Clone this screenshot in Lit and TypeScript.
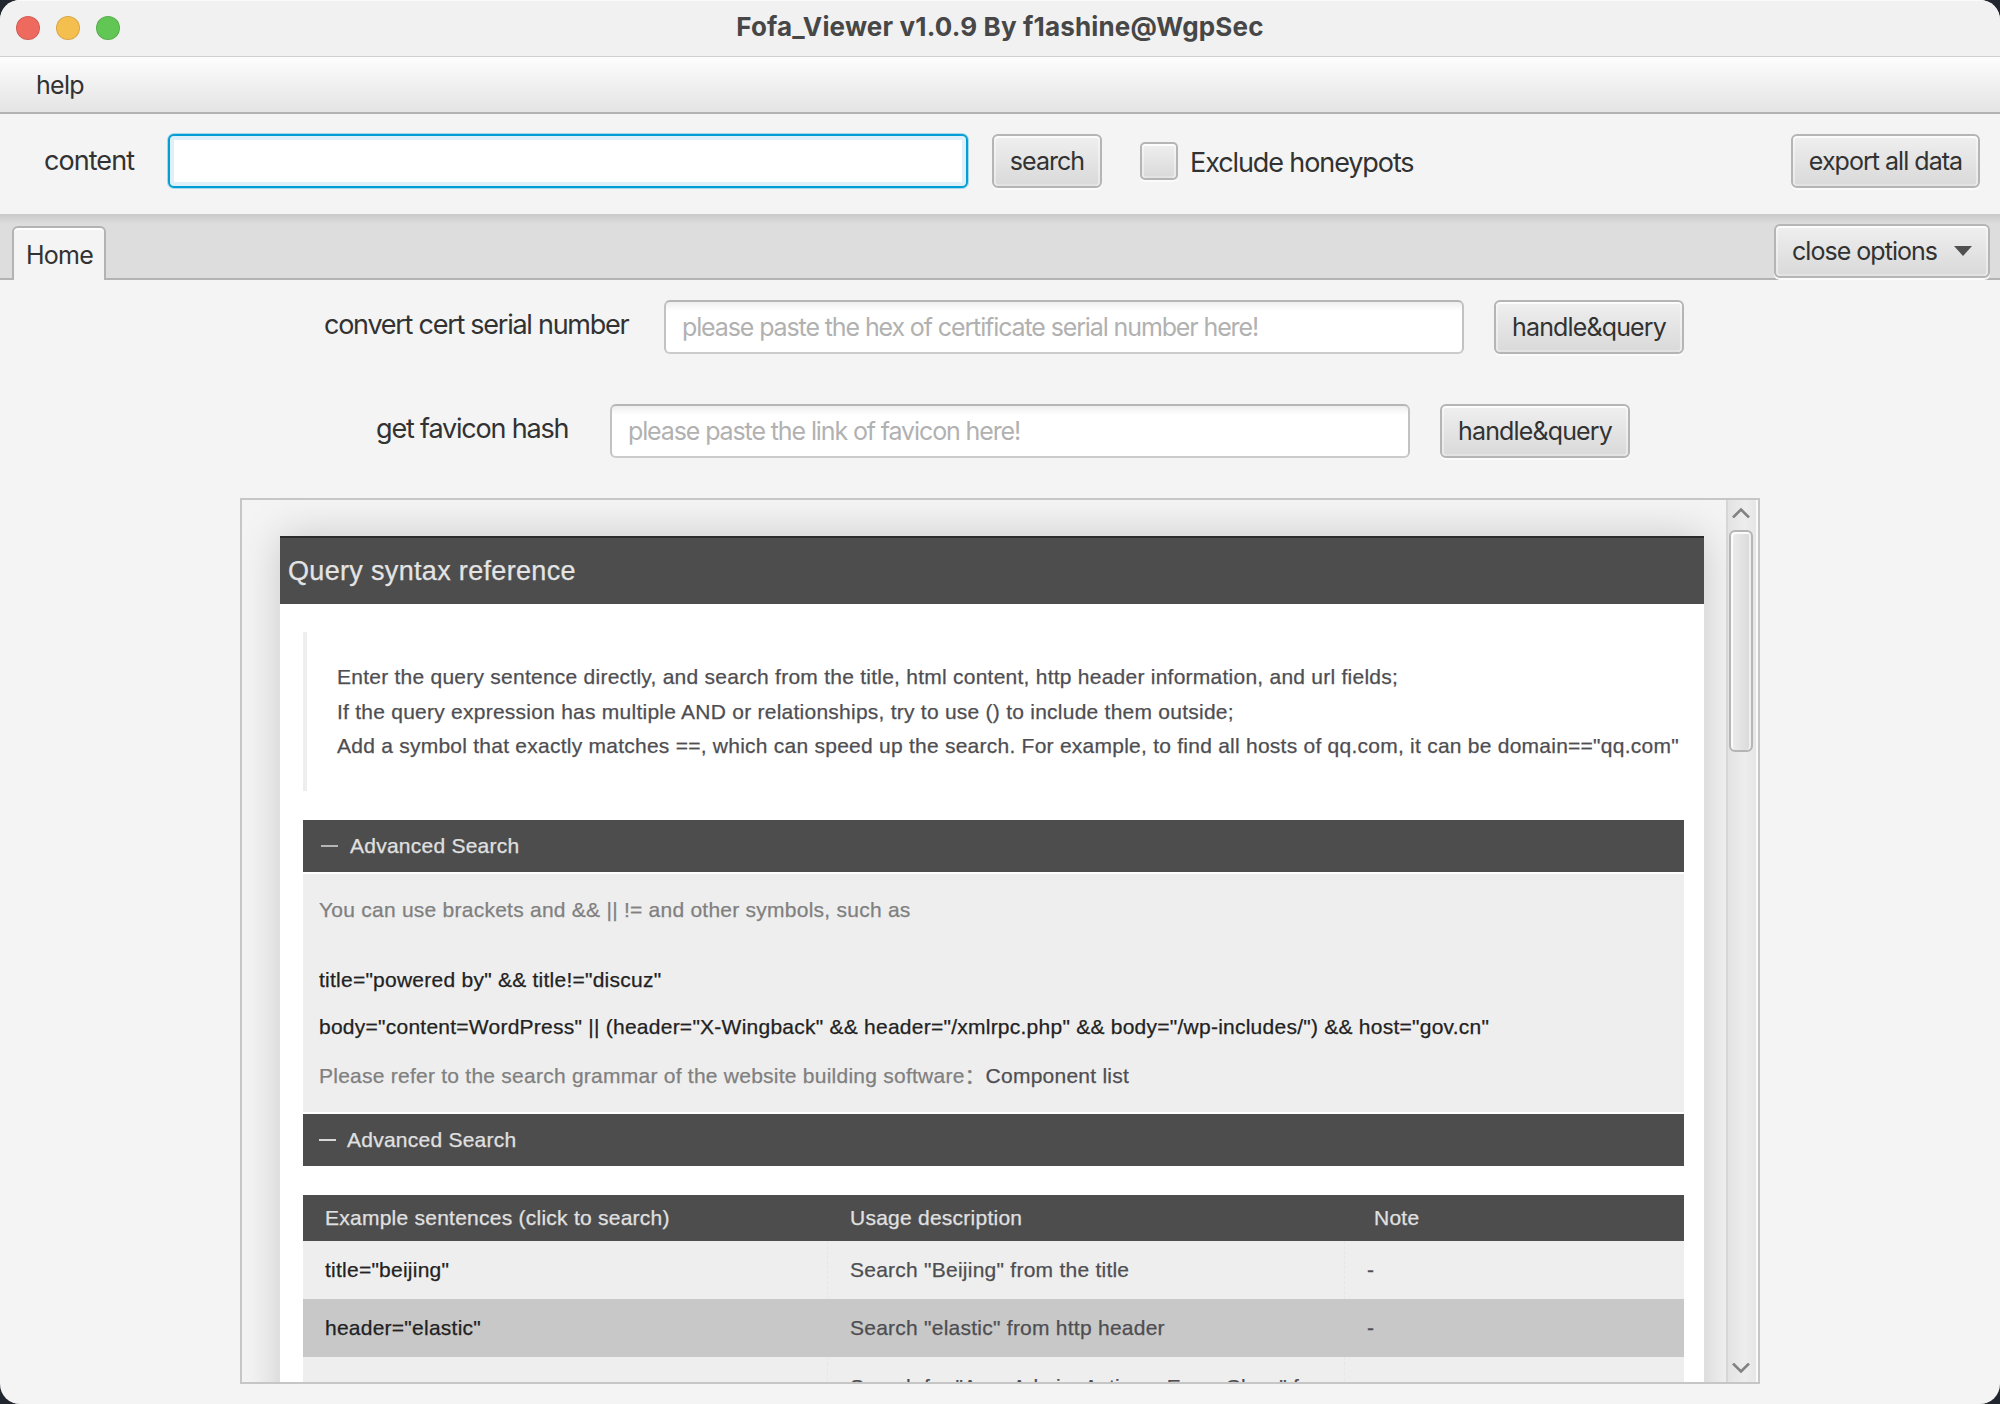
import { LitElement, html, css, svg } from "lit";
import { customElement } from "lit/decorators.js";

interface SyntaxRow {
  example: string;
  usage: string;
  note: string;
}

const ROWS: SyntaxRow[] = [
  { example: 'title="beijing"', usage: 'Search "Beijing" from the title', note: "-" },
  { example: 'header="elastic"', usage: 'Search "elastic" from http header', note: "-" },
  { example: "", usage: 'Search for "App, Admin, Actions, Error, Class" f', note: "" },
];

const chevron = (d: string) => html`
  <svg class="chevron" viewBox="0 0 18 10" width="18" height="10">${svg`<path d=${d} />`}</svg>
`;

@customElement("app-root")
export class AppRoot extends LitElement {
  static styles = css`
    :host {
      display: block;
      width: 2000px;
      height: 1404px;
      background: #22262e;
      overflow: hidden;
    }
    * {
      box-sizing: border-box;
    }
    .window {
      display: flex;
      flex-direction: column;
      width: 2000px;
      height: 1404px;
      border-radius: 20px;
      overflow: hidden;
      background: #f4f4f4;
      color: #323232;
      font-family: Inter, "Liberation Sans", sans-serif;
      font-size: 25px;
      white-space: nowrap;
    }
    .titlebar {
      display: grid;
      grid-template-columns: 1fr auto 1fr;
      align-items: center;
      height: 57px;
      padding: 0 16px 1px;
      background: #f1f1f1;
      border-bottom: 1px solid #cfcfcf;
      box-shadow: inset 0 1px 0 #fafafa;
    }
    .lights {
      display: flex;
      gap: 16px;
    }
    .light {
      width: 24px;
      height: 24px;
      border-radius: 50%;
      border: 1px solid rgba(0, 0, 0, 0.12);
    }
    .red { background: #ee6a5f; }
    .amber { background: #f5bf4f; }
    .green { background: #62c655; }
    .title {
      font-size: 26px;
      font-weight: 700;
      letter-spacing: 0.16px;
      color: #474747;
      line-height: 52px;
      padding-bottom: 2px;
    }
    .menubar {
      height: 57px;
      padding-left: 36px;
      line-height: 56px;
      letter-spacing: -0.7px;
      background: linear-gradient(#fdfdfd, #e4e4e4);
      border-bottom: 2px solid #b3b3b3;
    }
    .toolbar {
      display: flex;
      height: 100px;
      padding: 20px 20px 0 44px;
    }
    .label,
    .check-label {
      font-size: 27px;
    }
    .toolbar .label {
      width: 124px;
      line-height: 53px;
      letter-spacing: -0.95px;
    }
    .field {
      width: 800px;
      height: 54px;
      padding-left: 16px;
      border: 2px solid #c2c2c2;
      border-top-color: #b5b5b5;
      border-bottom-color: #cbcbcb;
      border-radius: 6px;
      background: linear-gradient(#eeeeee, #ffffff 9px);
      color: #b1b1b1;
      line-height: 51px;
      letter-spacing: -1.12px;
    }
    .focused {
      border-color: #039ed3;
      background: #ffffff;
      box-shadow: inset 0 0 0 4px #dff0f8, 0 0 0 1px #a5d8ea;
    }
    .button {
      height: 54px;
      border: 2px solid #b5b5b5;
      border-radius: 6px;
      background: linear-gradient(#efefef, #d9d9d9);
      box-shadow: inset 0 2px 0 #fcfcfc, inset 2px 0 0 rgba(255, 255, 255, 0.4),
        inset -2px 0 0 rgba(255, 255, 255, 0.4), inset 0 -2px 0 rgba(255, 255, 255, 0.25), 0 2px 0 #fbfbfb;
      line-height: 50px;
      text-align: center;
      letter-spacing: -0.97px;
    }
    .search { width: 110px; margin-left: 24px; }
    .checkbox {
      width: 38px;
      height: 38px;
      margin: 8px 12px 0 38px;
      border-radius: 5px;
    }
    .check-label { line-height: 57px; letter-spacing: -1.1px; }
    .export { width: 189px; margin-left: auto; }
    .tabs {
      display: flex;
      justify-content: space-between;
      height: 66px;
      padding: 10px 10px 0 12px;
      background: linear-gradient(#c9c9c9, #dddddd 10px);
      border-bottom: 2px solid #b3b3b3;
    }
    .tab {
      width: 94px;
      height: 54px;
      margin-top: 2px;
      border: 2px solid #b3b3b3;
      border-bottom: none;
      border-radius: 6px 6px 0 0;
      background: #f4f4f4;
      box-shadow: inset 0 2px 0 #ffffff;
      line-height: 54px;
      text-align: center;
      letter-spacing: -0.8px;
      padding-left: 1px;
    }
    .close {
      display: flex;
      align-items: center;
      width: 216px;
      padding-left: 16px;
      gap: 17px;
    }
    .triangle {
      width: 18px;
      height: 10px;
      clip-path: polygon(0 0, 100% 0, 50% 100%);
      background: #505050;
    }
    .form-row {
      display: flex;
      height: 54px;
      margin-bottom: 50px;
    }
    .form-row .label { line-height: 50px; letter-spacing: -1.26px; }
    .cert { margin-top: 20px; padding-left: 324px; }
    .cert .label { width: 340px; }
    .form-row.favicon { padding-left: 376px; margin-bottom: 40px; }
    .favicon .label { width: 234px; letter-spacing: -1.18px; }
    .query { width: 190px; margin-left: 30px; letter-spacing: -0.86px; }
    .panel {
      display: flex;
      width: 1520px;
      height: 886px;
      margin-left: 240px;
      border: 2px solid #c6c6c6;
    }
    .view {
      width: 1484px;
      height: 882px;
      padding: 36px 20px 0 38px;
      overflow: hidden;
      font-family: "Liberation Sans", Arial, sans-serif;
      font-size: 21px;
      letter-spacing: 0.245px;
      -webkit-text-stroke: 0.25px currentColor;
      color: #4e4e52;
    }
    .card {
      width: 1424px;
      height: 1200px;
      background: #ffffff;
      box-shadow: 0 0 40px rgba(0, 0, 0, 0.18);
    }
    .card-head {
      height: 68px;
      padding-left: 8px;
      border-top: 2px solid #2b2b2b;
      background: #4d4d4d;
      color: #e4e4e4;
      font-size: 27px;
      letter-spacing: 0.33px;
      line-height: 66px;
    }
    .card-body { padding: 28px 20px 0 23px; }
    .quote {
      height: 159px;
      padding: 28px 0 0 30px;
      border-left: 4px solid #eeeeee;
      line-height: 34.7px;
    }
    .bar {
      display: flex;
      align-items: center;
      height: 52px;
      background: #4d4d4d;
      color: #e0e0e0;
      line-height: 52px;
    }
    .bar-first { margin-top: 29px; padding-left: 18px; gap: 12px; }
    .bar-second { margin-top: 2px; padding-left: 16px; gap: 11px; }
    .dash { width: 17px; height: 2px; background: #b5b5b5; }
    .bar-second .dash { background: #d8d8d8; }
    .syntax {
      height: 238px;
      margin-top: 2px;
      padding: 18px 0 0 16px;
      background: #eeeeee;
      color: #808080;
      line-height: 36px;
    }
    .code { color: #222222; }
    .code-first { margin-top: 34px; }
    .code-second { margin-top: 11px; }
    .refer { display: flex; margin-top: 13px; }
    .component { margin-left: 11px; color: #4e4e52; }
    .colon { width: 10px; line-height: 32px; font-family: "Noto Sans CJK SC", sans-serif; }
    .table { margin-top: 29px; }
    .row {
      display: grid;
      grid-template-columns: 524px 517px 1fr;
      height: 58px;
      background: #eeeeee;
      line-height: 58px;
    }
    .row:nth-child(odd) { background: #c8c8c8; }
    .row:first-child {
      height: 46px;
      background: #4d4d4d;
      color: #e0e0e0;
      line-height: 46px;
    }
    .row:last-child { line-height: 60px; }
    .cell { padding-left: 22px; }
    .cell + .cell { padding-left: 23px; }
    .row:nth-child(even) .cell + .cell { border-left: 1px dashed #e6e6e6; padding-left: 22px; }
    .row .cell.head-note { padding-left: 30px; }
    .scrollbar {
      display: flex;
      flex-direction: column;
      align-items: center;
      width: 32px;
      height: 882px;
      padding: 8px 2px 9px 0;
      border-left: 2px solid #d6d6d6;
      border-right: 2px solid #fafafa;
      background: linear-gradient(90deg, #e3e3e3, #ededed 60%, #e6e6e6);
    }
    .thumb {
      width: 24px;
      height: 222px;
      margin-top: 12px;
      margin-bottom: auto;
      border: 2px solid #b5b5b5;
      border-radius: 6px;
      background: linear-gradient(90deg, #ededed, #d9d9d9);
      box-shadow: inset 2px 2px 0 #fbfbfb, inset -2px 0 0 #f0f0f0;
    }
    .chevron {
      flex: none;
      fill: none;
      stroke: #828282;
      stroke-width: 2.6;
    }
  `;

  render() {
    return html`
      <div class="window">
        <header class="titlebar">
          <div class="lights">
            <span class="light red"></span><span class="light amber"></span><span class="light green"></span>
          </div>
          <div class="title">Fofa_Viewer v1.0.9 By f1ashine@WgpSec</div>
        </header>
        <nav class="menubar"><span>help</span></nav>
        <section class="toolbar">
          <div class="label">content</div>
          <div class="field focused"></div>
          <div class="button search">search</div>
          <div class="button checkbox"></div>
          <div class="check-label">Exclude honeypots</div>
          <div class="button export">export all data</div>
        </section>
        <section class="tabs">
          <div class="tab">Home</div>
          <div class="button close"><span>close options</span><span class="triangle"></span></div>
        </section>
        <section class="form-row cert">
          <div class="label">convert cert serial number</div>
          <div class="field">please paste the hex of certificate serial number here!</div>
          <div class="button query">handle&amp;query</div>
        </section>
        <section class="form-row favicon">
          <div class="label">get favicon hash</div>
          <div class="field">please paste the link of favicon here!</div>
          <div class="button query">handle&amp;query</div>
        </section>
        <main class="panel">
          <div class="view">
            <article class="card">
              <div class="card-head">Query syntax reference</div>
              <div class="card-body">
                <div class="quote">
                  <div>Enter the query sentence directly, and search from the title, html content, http header information, and url fields;</div>
                  <div>If the query expression has multiple AND or relationships, try to use () to include them outside;</div>
                  <div>Add a symbol that exactly matches ==, which can speed up the search. For example, to find all hosts of qq.com, it can be domain=="qq.com"</div>
                </div>
                <div class="bar bar-first"><span class="dash"></span><span>Advanced Search</span></div>
                <div class="syntax">
                  <div>You can use brackets and &amp;&amp; || != and other symbols, such as</div>
                  <div class="code code-first">title="powered by" &amp;&amp; title!="discuz"</div>
                  <div class="code code-second">body="content=WordPress" || (header="X-Wingback" &amp;&amp; header="/xmlrpc.php" &amp;&amp; body="/wp-includes/") &amp;&amp; host="gov.cn"</div>
                  <div class="refer">
                    <span>Please refer to the search grammar of the website building software</span><span class="colon" lang="zh-CN">：</span><span class="component">Component list</span>
                  </div>
                </div>
                <div class="bar bar-second"><span class="dash"></span><span>Advanced Search</span></div>
                <div class="table">
                  <div class="row">
                    <div class="cell">Example sentences (click to search)</div>
                    <div class="cell">Usage description</div>
                    <div class="cell head-note">Note</div>
                  </div>
                  ${ROWS.map((r) => html`<div class="row">
                    <div class="cell code">${r.example}</div>
                    <div class="cell">${r.usage}</div>
                    <div class="cell">${r.note}</div>
                  </div>`)}
                </div>
              </div>
            </article>
          </div>
          <div class="scrollbar">
            ${chevron("M1 9.5 L9 1.5 L17 9.5")}
            <div class="thumb"></div>
            ${chevron("M1 0.5 L9 8.5 L17 0.5")}
          </div>
        </main>
      </div>
    `;
  }
}
